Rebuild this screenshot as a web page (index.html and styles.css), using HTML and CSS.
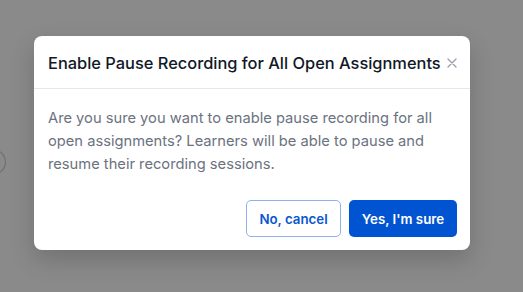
FILE: index.html
```html
<!DOCTYPE html>
<html lang="en">

<head>
  <meta charset="UTF-8">
  <meta name="viewport" content="width=device-width, initial-scale=1.0">
  <title>Enable Pause Recording</title>
  <link rel="stylesheet" href="styles.css">
</head>

<body>
  <div class="backdrop">
    <div class="bg-circle"></div>

    <div class="modal">
      <div class="modal-header">
        <h3 class="modal-title">Enable Pause Recording for All Open Assignments</h3>
        <button class="close-btn" aria-label="Close">
          <svg width="10" height="10" viewBox="0 0 10 10">
            <path d="M1 1 L9 9 M9 1 L1 9" stroke="currentColor" stroke-width="1.4" stroke-linecap="round" />
          </svg>
        </button>
      </div>

      <div class="modal-body">
        <p>Are you sure you want to enable pause recording for all open assignments? Learners will be able to pause and resume their recording sessions.</p>
      </div>

      <div class="modal-footer">
        <button class="btn btn-outline">No, cancel</button>
        <button class="btn btn-primary">Yes, I'm sure</button>
      </div>
    </div>
  </div>
</body>

</html>
```

FILE: styles.css
```css
body {
  font-family: Inter, 'Noto Sans', sans-serif;
  margin: 0;
  background-color: #8a8a8a;
  color: #111827;
}

.backdrop {
  position: relative;
  width: 523px;
  height: 292px;
  overflow: hidden;
  padding-top: 36px;
  padding-left: 34px;
  box-sizing: border-box;
}

.bg-circle {
  position: absolute;
  left: -16px;
  top: 150px;
  width: 20px;
  height: 22px;
  border: 1px solid #6e6e6e;
  border-radius: 50%;
}

.modal {
  width: 436px;
  background-color: white;
  border-radius: 8px;
  box-shadow: 0 10px 24px rgba(0, 0, 0, 0.18);
}

.modal-header {
  display: flex;
  align-items: center;
  height: 53px;
  padding: 2px 14px 0;
  border-bottom: 1px solid #e5e7eb;
  box-sizing: border-box;
}

.modal-title {
  margin: 0;
  font-size: 16.4px;
  font-weight: 500;
  color: #111827;
  white-space: nowrap;
}

.close-btn {
  background: none;
  border: none;
  padding: 0;
  color: #9ca3af;
  display: flex;
  margin-left: 6px;
}

.modal-body {
  padding: 18px 14px 0;
}

.modal-body p {
  margin: 0;
  font-size: 14.7px;
  line-height: 23px;
  color: #6b7280;
}

.modal-footer {
  display: flex;
  justify-content: flex-end;
  gap: 8px;
  padding: 24px 13px 13px;
}

.btn {
  font-family: Inter, 'Noto Sans', sans-serif;
  font-size: 13.3px;
  font-weight: 600;
  height: 37px;
  border-radius: 5px;
  box-sizing: border-box;
  cursor: pointer;
}

.btn-outline {
  width: 95px;
  background-color: white;
  color: #0b57d0;
  border: 1px solid #8fb0ea;
}

.btn-primary {
  width: 108px;
  background-color: #0054d2;
  color: white;
  border: none;
}
```
